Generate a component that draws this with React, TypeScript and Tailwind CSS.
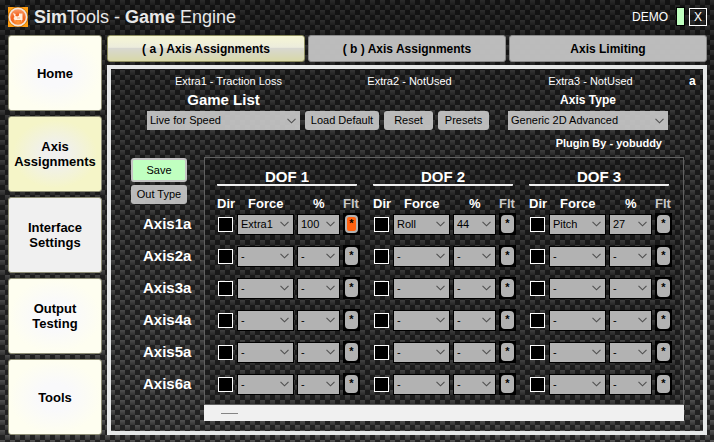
import React, { useState } from "react";

const AXES = ["Axis1a", "Axis2a", "Axis3a", "Axis4a", "Axis5a", "Axis6a"];
const GROUPS = [
  { title: "DOF 1", force: "Extra1", percent: "100", filtered: true },
  { title: "DOF 2", force: "Roll", percent: "44", filtered: false },
  { title: "DOF 3", force: "Pitch", percent: "27", filtered: false },
];

function CarbonFibre() {
  return (
    <svg className="absolute inset-0 -z-10 h-full w-full" shapeRendering="crispEdges" aria-hidden="true">
      <defs>
        <linearGradient id="strand" x1="0" y1="0" x2="0" y2="1">
          <stop offset="0" stopColor="#545454" />
          <stop offset="1" stopColor="#363636" />
        </linearGradient>
        <linearGradient id="shade" x1="0" y1="0" x2="0" y2="1">
          <stop offset="0" stopColor="#000" stopOpacity="0.48" />
          <stop offset="0.25" stopColor="#000" stopOpacity="0.3" />
          <stop offset="1" stopColor="#000" stopOpacity="0" />
        </linearGradient>
        <pattern id="weave" width="10" height="10" patternUnits="userSpaceOnUse">
          <rect width="10" height="10" fill="#222" />
          <rect width="5" height="5" fill="url(#strand)" />
          <rect x="5" y="5" width="5" height="5" fill="url(#strand)" />
        </pattern>
      </defs>
      <rect width="100%" height="100%" fill="url(#weave)" />
      <rect width="100%" height="100%" fill="url(#shade)" />
    </svg>
  );
}

function Logo() {
  return (
    <svg width="20" height="20" viewBox="0 0 20 20" aria-hidden="true">
      <defs>
        <radialGradient id="orb" cx="0.5" cy="0.8" r="0.8">
          <stop offset="0" stopColor="#ff9a3c" />
          <stop offset="0.5" stopColor="#f4601a" />
          <stop offset="1" stopColor="#f9a878" />
        </radialGradient>
      </defs>
      <rect width="20" height="20" fill="#c87408" />
      <path d="M0 0h6L0 6zM20 0v6l-6-6zM0 20v-6l6 6zM20 20h-6l6-6z" fill="#ff9d12" />
      <circle cx="10" cy="10" r="8.6" fill="url(#orb)" stroke="#f3e6dc" strokeWidth="1.6" />
      <path d="M5 6l2.500 1v2l2 .5 1.500-1V6.500h3.500V13h-8L5.500 11l1-1z" fill="#ffeedd" />
      <path d="M7 13v1.500M13.500 13v1.500M9 11h3" stroke="#f4b48a" strokeWidth="1" />
    </svg>
  );
}

function Picker({
  label,
  value,
  options,
  className,
}: {
  label: string;
  value: string;
  options: string[];
  className: string;
}) {
  return (
    <span className={"relative block " + className}>
      <select
        aria-label={label}
        defaultValue={value}
        className="block h-full w-full appearance-none pl-[3px] pr-3 outline-none"
      >
        {options.map((o) => (
          <option key={o}>{o}</option>
        ))}
      </select>
      <svg
        className="pointer-events-none absolute inset-y-0 right-1 my-auto"
        width="9"
        height="6"
        viewBox="0 0 9 6"
        fill="none"
        stroke="#505050"
        strokeWidth="1.1"
        aria-hidden="true"
      >
        <path d="M.5.8l4 4 4-4" />
      </svg>
    </span>
  );
}

const NAV = [
  { label: "Home", look: "bg-[radial-gradient(ellipse_at_center,#f9f9fb_25%,#fefef0_70%)]" },
  { label: "Axis Assignments", look: "bg-[radial-gradient(ellipse_at_center,#f0f0f0_15%,#f5f5c8_65%)]" },
  { label: "Interface Settings", look: "bg-[#f0f0f0]" },
  { label: "Output Testing", look: "bg-[radial-gradient(ellipse_at_center,#f9f9fb_25%,#fefef0_70%)]" },
  { label: "Tools", look: "bg-[radial-gradient(ellipse_at_center,#f9f9fb_25%,#fefef0_70%)]" },
];

const TABS = ["( a ) Axis Assignments", "( b ) Axis Assignments", "Axis Limiting"];

const GREY_BUTTON = "h-[19px] rounded-[3px] bg-[#cbcbcb]/90 text-black";

function DofGroup({ group }: { group: (typeof GROUPS)[number] }) {
  return (
    <section className="w-[143px]">
      <h2 className="h-7 w-[140px] rounded-b-[1px] border-b-2 border-[#eeeeee] text-center text-[15px] leading-[38px] font-bold">
        {group.title}
      </h2>
      <div className="grid h-[22px] grid-cols-[20px_60px_46px_17px] items-end text-[13px] leading-2 font-bold">
        <span>Dir</span>
        <span className="pl-[11px]">Force</span>
        <span className="pl-4">%</span>
        <span className="text-[#c8c8c8]">Flt</span>
      </div>
      {AXES.map((axis, i) => (
        <div key={axis} className="grid h-8 grid-cols-[20px_60px_46px_17px] items-center">
          <input
            type="checkbox"
            aria-label={`${group.title} ${axis} direction`}
            className="ml-px size-[15px] appearance-none border border-white bg-black"
          />
          <Picker
            label={`${group.title} ${axis} force`}
            value={i === 0 ? group.force : "-"}
            options={i === 0 ? [group.force, "-"] : ["-"]}
            className="h-[21px] w-[57px] border border-black bg-[#b2b2b2] text-black"
          />
          <Picker
            label={`${group.title} ${axis} percent`}
            value={i === 0 ? group.percent : "-"}
            options={i === 0 ? [group.percent, "-"] : ["-"]}
            className="h-[21px] w-[43px] border border-black bg-[#b2b2b2] text-black"
          />
          <button
            type="button"
            aria-label={`${group.title} ${axis} filter`}
            className="flex h-[22px] w-[17px] bg-black p-0.5"
          >
            <span
              className={
                "flex-1 rounded-[4px] border-2 border-[#b2b2b2] text-center text-[11px] leading-3 font-bold text-black " +
                (i === 0 && group.filtered ? "bg-[#ff6210]" : "bg-[#b2b2b2]")
              }
            >
              *
            </span>
          </button>
        </div>
      ))}
    </section>
  );
}

export default function App() {
  const [tab, setTab] = useState(0);
  return (
    <div className="relative isolate flex min-h-screen flex-col overflow-hidden bg-[#1c1c1c] pr-[7px] pb-[7px] pl-2 font-['Liberation_Sans',Arial,sans-serif] text-xs text-white">
      <CarbonFibre />
      <header className="flex h-[35px] items-center gap-1.5 pb-0.5">
        <Logo />
        <h1 className="flex-1 text-lg leading-6 text-[#e8e8e8]">
          <b>Sim</b>Tools - <b>Game</b> Engine
        </h1>
        <span>DEMO</span>
        <span className="ml-0.5 h-[19px] w-[9px] border border-black bg-[#c0ffc0]" />
        <button type="button" aria-label="Close" className="-ml-0.5 size-[18px] border border-white text-xs leading-4">
          X
        </button>
      </header>

      <div className="flex flex-1 gap-[5px]">
        <nav className="flex w-[94px] flex-col gap-[5px]">
          {NAV.map((item) => (
            <button
              key={item.label}
              type="button"
              className={
                "h-[76px] rounded-[3px] border border-[#8f8f76] px-1 text-[13px] leading-[15px] font-bold text-black " +
                item.look
              }
            >
              {item.label}
            </button>
          ))}
        </nav>

        <div className="flex min-w-0 flex-1 flex-col gap-[3px]">
          <div className="grid h-[27px] grid-cols-3 gap-[3px]">
            {TABS.map((label, i) => (
              <button
                key={label}
                type="button"
                onClick={() => setTab(i)}
                className={
                  "rounded-[3px] border text-xs font-bold text-black " +
                  (i === tab
                    ? "border-[#8f8f60] bg-[linear-gradient(#f6f6d4,#ececdc_45%,#d8d8d0_50%,#d8d8a8)]"
                    : "border-[#8a8a8a] bg-[#c4c4c4]/95")
                }
              >
                {label}
              </button>
            ))}
          </div>

          <main className="flex-1 border-4 border-[#e6e8e8] pt-1 pb-[10px] text-[11px]">
            <div className="flex h-4 items-center pl-[27px]">
              <div className="grid flex-1 grid-cols-3 text-center">
                <span>Extra1 - Traction Loss</span>
                <span>Extra2 - NotUsed</span>
                <span>Extra3 - NotUsed</span>
              </div>
              <b className="w-[22px] pl-2 text-xs">a</b>
            </div>

            <div className="flex items-end pr-[35px] pl-9">
              <div className="w-[153px]">
                <h2 className="h-[22px] text-center text-[15px] leading-[22px] font-bold">Game List</h2>
                <Picker
                  label="Game List"
                  value="Live for Speed"
                  options={["Live for Speed"]}
                  className="h-[19px] bg-[#cbcbcb]/90 text-black"
                />
              </div>
              <div className="flex flex-1 gap-[5px] pl-[5px]">
                <button type="button" className={GREY_BUTTON + " w-[74px]"}>Load Default</button>
                <button type="button" className={GREY_BUTTON + " w-[49px]"}>Reset</button>
                <button type="button" className={GREY_BUTTON + " w-[51px]"}>Presets</button>
              </div>
              <div className="w-[160px]">
                <h2 className="h-[22px] text-center text-xs leading-[22px] font-bold">Axis Type</h2>
                <Picker
                  label="Axis Type"
                  value="Generic 2D Advanced"
                  options={["Generic 2D Advanced"]}
                  className="h-[19px] bg-[#cbcbcb]/90 text-black"
                />
              </div>
            </div>

            <p className="h-[27px] pr-[41px] text-right text-[11px] leading-[26px] font-bold">Plugin By - yobuddy</p>

            <div className="flex pr-[19px] pl-5">
              <div className="flex w-[73px] flex-col">
                <button
                  type="button"
                  className="mt-px h-6 w-14 rounded-[3px] border-2 border-[#c4c4c4] bg-[#c0ffc0] text-black"
                >
                  Save
                </button>
                <button type="button" className={GREY_BUTTON + " mt-[3px] w-14"}>Out Type</button>
                <ul className="mt-1 pl-3 text-[15px] leading-8 font-bold">
                  {AXES.map((axis) => (
                    <li key={axis}>{axis}</li>
                  ))}
                </ul>
              </div>
              <div className="min-w-0 flex-1">
                <div className="flex h-[248px] gap-[13px] overflow-hidden border border-[#606060] bg-black/15 pl-3">
                  {GROUPS.map((group) => (
                    <DofGroup key={group.title} group={group} />
                  ))}
                </div>
                <div className="flex h-4 items-center bg-[#f0f0f0] pl-[17px]">
                  <span className="h-px w-[17px] bg-[#858585]" />
                </div>
              </div>
            </div>
          </main>
        </div>
      </div>
    </div>
  );
}
